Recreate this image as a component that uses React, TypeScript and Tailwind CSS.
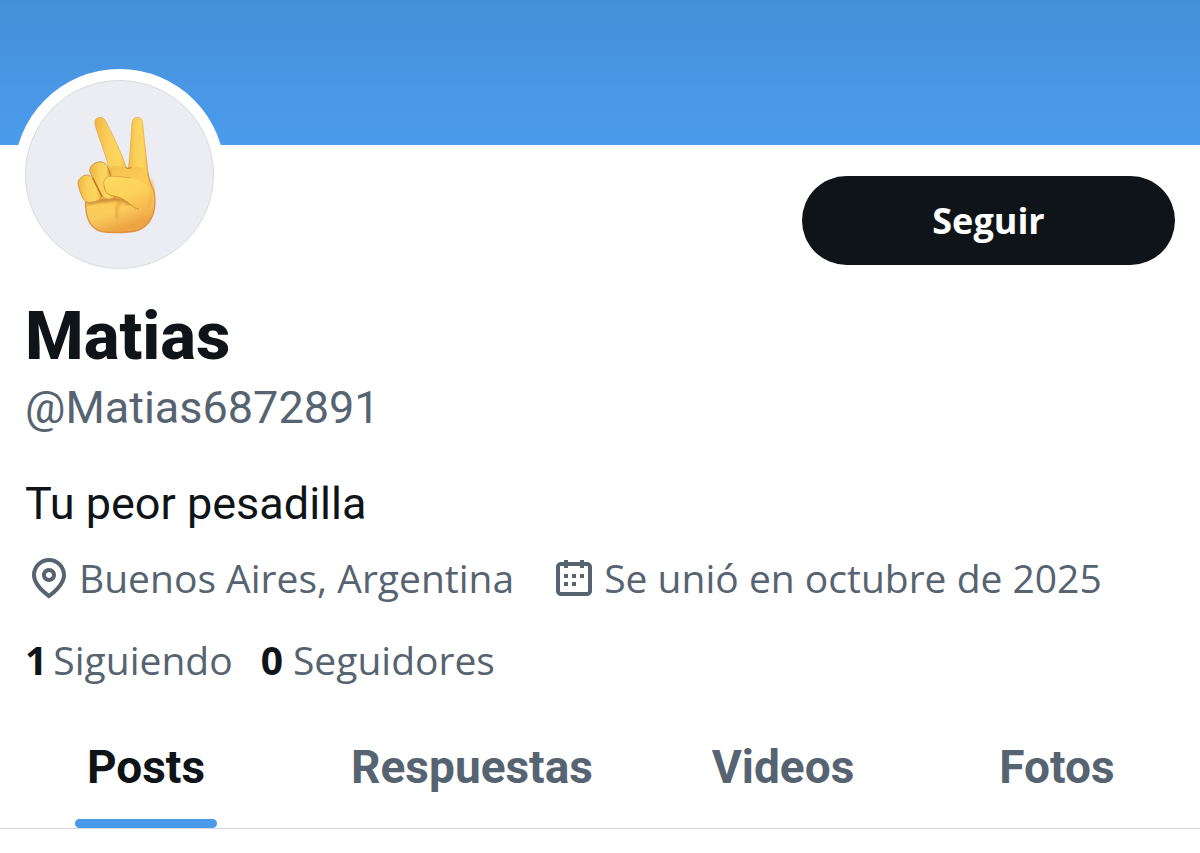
import { useState } from 'react';
import clsx from 'clsx';

const profile = {
  name: 'Matias',
  handle: '@Matias6872891',
  bio: 'Tu peor pesadilla',
  location: 'Buenos Aires, Argentina',
  joined: 'Se unió en octubre de 2025',
  following: 1,
  followers: 0,
};

const tabs = ['Posts', 'Respuestas', 'Videos', 'Fotos'];

function VictoryHand() {
  return (
    <svg viewBox="0 0 327 420" className="w-[109px] h-[140px]" aria-hidden="true">
      <defs>
        <linearGradient id="palm" x1="0" y1="0" x2="0.35" y2="1">
          <stop offset="0" stopColor="#f3bb48" />
          <stop offset="0.45" stopColor="#fbcd57" />
          <stop offset="0.75" stopColor="#fbcb5c" />
          <stop offset="1" stopColor="#eda443" />
        </linearGradient>
        <linearGradient id="finger" x1="0" y1="0" x2="1" y2="0">
          <stop offset="0" stopColor="#efb544" />
          <stop offset="0.4" stopColor="#fbd05a" />
          <stop offset="0.75" stopColor="#fcd65e" />
          <stop offset="1" stopColor="#f0b747" />
        </linearGradient>
        <linearGradient id="thumb" x1="0" y1="0" x2="0.6" y2="1">
          <stop offset="0" stopColor="#fddb62" />
          <stop offset="0.6" stopColor="#fcd25a" />
          <stop offset="1" stopColor="#f7be51" />
        </linearGradient>
        <filter id="soft" x="-20%" y="-20%" width="140%" height="140%">
          <feGaussianBlur stdDeviation="4" />
        </filter>
      </defs>
      {/* raised fingers */}
      <path d="M91 62C86 46 94 37 105 37c9 0 14 5 19 15 18 36 44 88 59 133l6 45-50-10-8-35C120 143 101 97 91 62z" fill="url(#finger)" stroke="#e0a545" strokeWidth="2" />
      <path d="M201 54c1-11 7-17 15-17 10 0 16 6 17 18 4 50 12 105 17 153l-20 40-44-30c9-50 11-112 15-164z" fill="url(#finger)" stroke="#e0a545" strokeWidth="2" />
      {/* palm */}
      <path d="M131 188c18-10 34-3 51-1 5 4 12 4 17 0 17-4 38 0 49 17 5 21 10 37 19 53 6 37 3 70-15 94-15 20-35 29-62 30-28 2-55 3-78-1-27-6-43-28-48-58-3-21-3-42 0-63z" fill="url(#palm)" />
      <path d="M248 204c5 21 10 37 19 53 6 37 3 70-15 94-15 20-35 29-62 30-28 2-55 3-78-1-27-6-43-28-48-58-2-12-3-24-2-37" fill="none" stroke="#df9040" strokeWidth="4" />
      <path d="M181 187c5 4 13 4 18 0" fill="none" stroke="#b9782c" strokeWidth="3" />
      {/* crease shadows */}
      <path d="M66 294c24-3 50-9 82-12 28 1 37 8 47 17" fill="none" stroke="#b76d20" strokeWidth="10" filter="url(#soft)" opacity="0.75" />
      <path d="M166 290c-12 14-15 29-11 50" fill="none" stroke="#d88d2e" strokeWidth="7" filter="url(#soft)" opacity="0.7" />
      {/* folded fingers */}
      <path d="M40 241c-4-13 5-24 17-29 12-4 22 0 27 9l24 46c3 9-1 16-8 19-10 5-25 8-34 5-12-4-19-24-26-50z" fill="url(#finger)" stroke="#d99a3c" strokeWidth="3" />
      <path d="M76 203c-5-13 4-26 20-31 15-4 27 1 32 14 8 23 16 51 22 76 3 13-2 19-14 20-14 2-22-3-27-14z" fill="url(#finger)" stroke="#d3933a" strokeWidth="3" />
      <path d="M83 219l28 56" fill="none" stroke="#b97524" strokeWidth="4" />
      <path d="M130 192l9 35" fill="none" stroke="#b97524" strokeWidth="5" filter="url(#soft)" />
      {/* thumb */}
      <path d="M117 242c-4-16 5-28 22-28 38 0 74 4 100 22 26 18 28 58 10 72-17 12-40 2-54-10-18-15-30-22-54-26-14-3-22-13-24-30z" fill="url(#thumb)" />
      <path d="M196 219c-19-4-38-5-57-5-17 0-26 12-22 28" fill="none" stroke="#e3aa47" strokeWidth="3" />
      <path d="M117 242c2 17 10 27 24 30 24 4 36 11 54 26 8 7 17 12 27 15" fill="none" stroke="#c98328" strokeWidth="3" opacity="0.8" />
      <path d="M255 225c14 35 8 75-20 98" fill="none" stroke="#f0aa4c" strokeWidth="14" filter="url(#soft)" opacity="0.5" />
    </svg>
  );
}

function LocationIcon() {
  return (
    <svg viewBox="0 0 24 24" className="size-12 shrink-0" fill="currentColor" aria-hidden="true">
      <path d="M12 7c-1.93 0-3.5 1.57-3.5 3.5S10.07 14 12 14s3.5-1.57 3.5-3.5S13.93 7 12 7zm0 5c-.827 0-1.5-.673-1.5-1.5S11.173 9 12 9s1.5.673 1.5 1.5S12.827 12 12 12zm0-10c-4.687 0-8.5 3.813-8.5 8.5 0 5.967 7.621 11.116 7.945 11.332l.555.37.555-.37c.324-.216 7.945-5.365 7.945-11.332C20.5 5.813 16.687 2 12 2zm0 17.77c-1.665-1.241-6.5-5.196-6.5-9.27C5.5 6.916 8.416 4 12 4s6.5 2.916 6.5 6.5c0 4.073-4.835 8.028-6.5 9.27z" />
    </svg>
  );
}

function CalendarIcon() {
  return (
    <svg viewBox="0 0 24 24" className="size-12 shrink-0" fill="currentColor" aria-hidden="true">
      <path d="M7 4V3h2v1h6V3h2v1h1.5C19.89 4 21 5.12 21 6.5v12c0 1.38-1.11 2.5-2.5 2.5h-13C4.12 21 3 19.88 3 18.5v-12C3 5.12 4.12 4 5.5 4H7zm0 2H5.5c-.27 0-.5.22-.5.5v12c0 .28.23.5.5.5h13c.28 0 .5-.22.5-.5v-12c0-.28-.22-.5-.5-.5H17v1h-2V6H9v1H7V6zm0 6h2v-2H7v2zm0 4h2v-2H7v2zm4-4h2v-2h-2v2zm0 4h2v-2h-2v2zm4-4h2v-2h-2v2z" />
    </svg>
  );
}

export default function App() {
  const [activeTab, setActiveTab] = useState('Posts');

  return (
    <div className="min-h-screen bg-white font-[Roboto,sans-serif] text-[#0f1419]">
      <div className="h-[145px] bg-linear-to-b from-[#468fd8] to-[#4b9ced]" />

      <main>
        <div className="px-[25px]">
          <div className="flex items-start justify-between">
            <div className="-mt-[65px] size-[189px] rounded-full bg-[#ecedf2] border border-[#d9dbe0] ring-[11px] ring-white flex items-center justify-center">
              <VictoryHand />
            </div>
            <button className="mt-[31px] h-[89px] w-[373px] rounded-full bg-[#0f1419] font-['Open_Sans',sans-serif] text-[36px] font-bold text-white">
              Seguir
            </button>
          </div>

          <h1 className="mt-[27px] text-[67px] leading-[80px] font-extrabold">{profile.name}</h1>
          <p className="mt-1 text-[45px] leading-[56px] text-[#566370]">{profile.handle}</p>
          <p className="mt-10 text-[45px] leading-[56px]">{profile.bio}</p>

          {/* Location and join date */}
          <div className="mt-[18px] flex flex-wrap gap-x-9 font-['Open_Sans',sans-serif] text-[39px] leading-[56px] text-[#566370]">
            <span className="flex items-center gap-[6px]">
              <LocationIcon />
              {profile.location}
            </span>
            <span className="flex items-center gap-[6px]">
              <CalendarIcon />
              {profile.joined}
            </span>
          </div>

          <div className="mt-[26px] flex flex-wrap gap-x-7 font-['Open_Sans',sans-serif] text-[39px] leading-[56px] text-[#566370]">
            <a href="#following" className="flex gap-[6px]">
              <strong className="font-bold text-[#0f1419]">{profile.following}</strong>
              Siguiendo
            </a>
            <a href="#followers" className="flex gap-[10px]">
              <strong className="font-bold text-[#0f1419]">{profile.followers}</strong>
              Seguidores
            </a>
          </div>
        </div>

        {/* Tabs */}
        <nav className="mt-[51px] grid grid-cols-[292fr_360fr_262fr_286fr] border-b border-[#d5dae0]">
          {tabs.map(tab => (
            <button
              key={tab}
              onClick={() => setActiveTab(tab)}
              className={clsx(
                'flex flex-col items-center text-[46px] leading-[56px] font-bold',
                activeTab === tab ? 'text-[#0f1419]' : 'text-[#566370]'
              )}
            >
              <span className="flex flex-col gap-6">
                {tab}
                <span className={clsx('-mx-3 h-[9px] rounded-full', activeTab === tab && 'bg-[#4b99e9]')} />
              </span>
            </button>
          ))}
        </nav>
      </main>
    </div>
  );
}
